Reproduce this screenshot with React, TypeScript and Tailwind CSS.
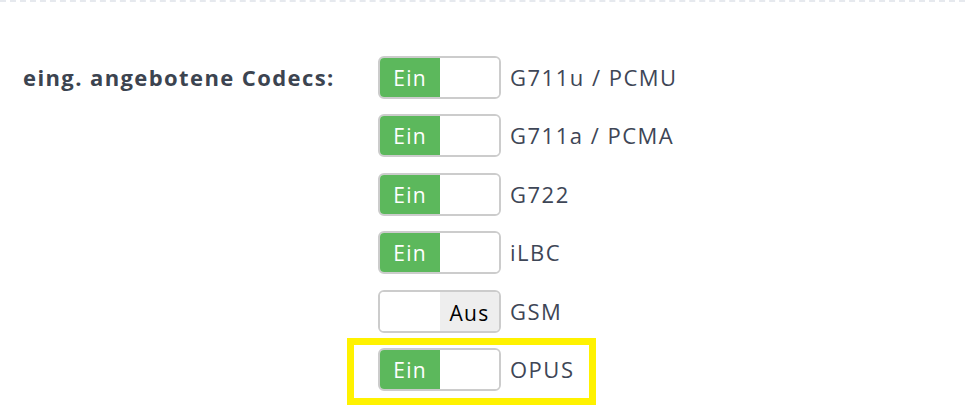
const codecs = [
  { name: "G711u / PCMU", on: true },
  { name: "G711a / PCMA", on: true },
  { name: "G722", on: true },
  { name: "iLBC", on: true },
  { name: "GSM", on: false },
  { name: "OPUS", on: true, highlight: true },
];

function Toggle({ on }: { on: boolean }) {
  return (
    <div className="flex h-[43px] w-[123px] overflow-hidden rounded-[6px] border-2 border-[#cccccc] bg-white text-[21px] tracking-[1.2px]">
      {on ? (
        <>
          <div className="flex w-[60px] items-center justify-center bg-[#5cb85c] pt-[2px] text-white">Ein</div>
          <div className="flex-1 bg-white" />
        </>
      ) : (
        <>
          <div className="w-[60px] bg-white" />
          <div className="flex flex-1 items-center justify-center bg-[#eeeeee] pt-[6px] text-black">Aus</div>
        </>
      )}
    </div>
  );
}

export default function App() {
  return (
    <div
      className="h-[415px] w-[965px] overflow-hidden bg-white"
      style={{ fontFamily: '"Open Sans", "Noto Sans", sans-serif' }}
    >
      <div className="border-t-2 border-dashed border-[#e6e9ee]" />
      <div className="flex pt-[54px]">
        <div className="w-[378px] pl-[23px] pt-[5px] text-[22px] font-bold tracking-[1.4px] text-[#3c4450]">
          eing. angebotene Codecs:
        </div>
        <div className="flex flex-col gap-[15.4px]">
          {codecs.map((c) => (
            <div key={c.name} className="relative flex items-center">
              {c.highlight && (
                <div className="absolute left-[-31px] top-[-10px] h-[67px] w-[249px] border-[7px] border-[#fff200]" />
              )}
              <Toggle on={c.on} />
              <span className="relative ml-[9px] text-[22px] tracking-[1.5px] text-[#3e4656]">{c.name}</span>
            </div>
          ))}
        </div>
      </div>
    </div>
  );
}
